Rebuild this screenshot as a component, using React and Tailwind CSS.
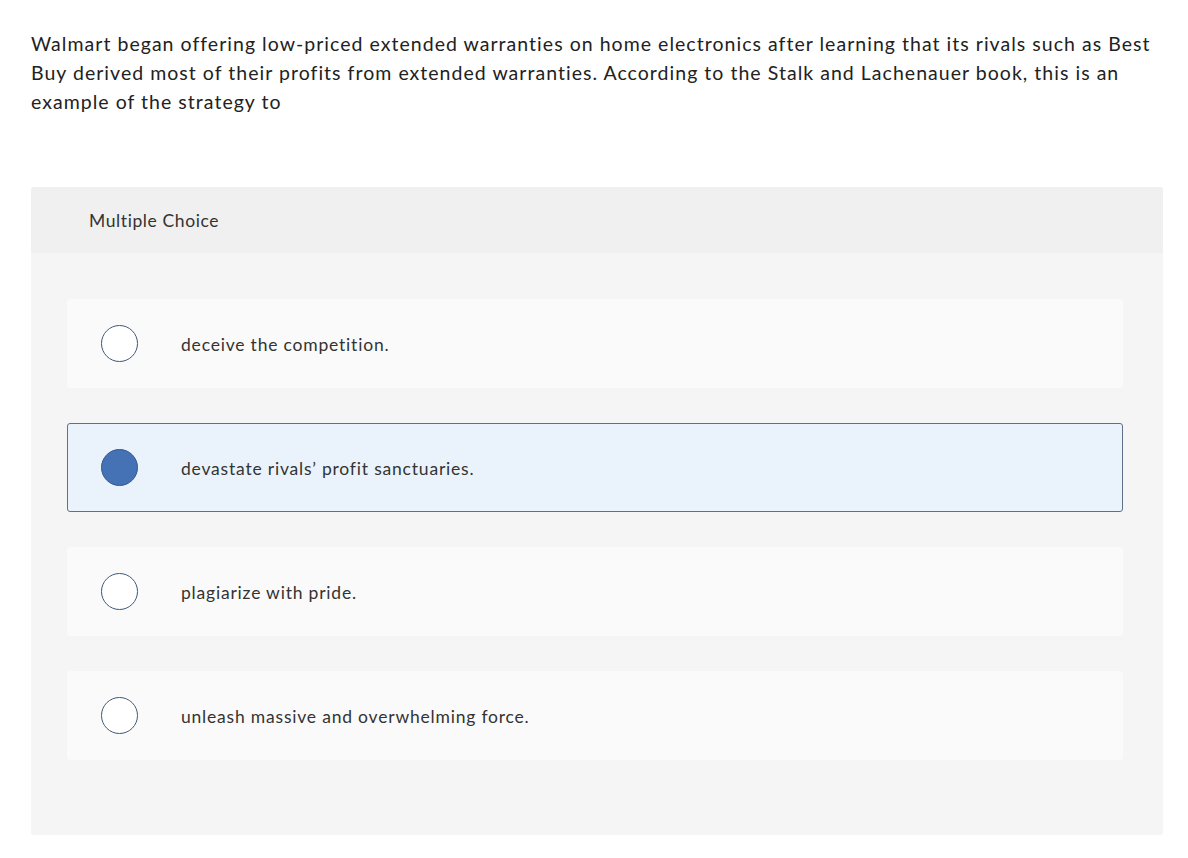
import React, { useState } from 'react';

const choices = [
  'deceive the competition.',
  'devastate rivals\u2019 profit sanctuaries.',
  'plagiarize with pride.',
  'unleash massive and overwhelming force.',
];

export default function App() {
  const [selected, setSelected] = useState(1);

  return (
    <div className="min-h-[858px] bg-white pl-[31px] pr-[25px] pt-[29px] pb-6 text-[#222]" style={{ fontFamily: 'Lato, "Open Sans", sans-serif' }}>
      <p className="text-[19.5px] leading-[29px] tracking-[1.03px]">
        Walmart began offering low-priced extended warranties on home electronics after learning that its rivals such as Best Buy derived most of their profits from extended warranties. According to the Stalk and Lachenauer book, this is an example of the strategy to
      </p>

      <div className="mt-[71px] rounded-[3px] overflow-hidden bg-[#f5f5f5]">
        <div className="h-[66px] bg-[#f0f0f0] flex items-center pl-[58px] pt-[2px] text-[17.5px] tracking-[0.6px] text-[#333]">
          Multiple Choice
        </div>
        <div className="pl-[36px] pr-[40px] pt-[46px] pb-[75px] flex flex-col gap-[35px]">
          {choices.map((c, i) => {
            const on = selected === i;
            return (
              <button
                key={c}
                onClick={() => setSelected(i)}
                className={`h-[89px] flex items-center text-left rounded-[3px] border ${
                  on ? 'bg-[#eaf3fb] border-[#5f7089]' : 'bg-[#fafafa] border-[#fafafa]'
                }`}
              >
                <span
                  className={`ml-[33px] w-[37px] h-[37px] rounded-full border shrink-0 ${
                    on ? 'bg-[#4472b5] border-[#35598f]' : 'bg-white border-[#3f5a78]'
                  }`}
                />
                <span className="ml-[43px] pt-[3px] text-[17.5px] tracking-[0.8px] text-[#333]">{c}</span>
              </button>
            );
          })}
        </div>
      </div>
    </div>
  );
}
